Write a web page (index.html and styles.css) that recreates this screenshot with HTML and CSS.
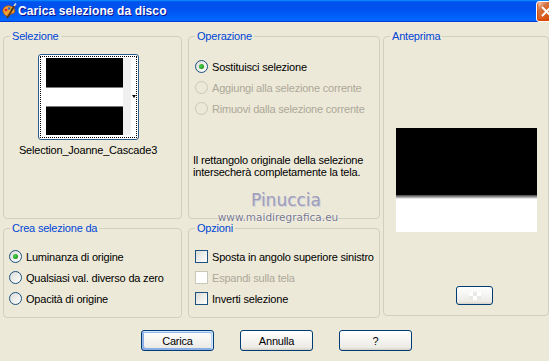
FILE: index.html
```html
<!DOCTYPE html>
<html lang="it">
<head>
<meta charset="utf-8">
<title>Carica selezione da disco</title>
<link rel="stylesheet" href="styles.css">
</head>
<body>
<div class="window">
  <div class="titlebar">
    <svg class="app-icon" width="16" height="16" viewBox="0 0 16 16">
      <path d="M2 9 C1 5 5 2 9 3 C13 4 15 7 13 10 C12 11 10 10 9 12 C8 14 4 14 2 9 Z" fill="#f0a030" stroke="#a05010" stroke-width="0.8"/>
      <circle cx="5" cy="7" r="1.3" fill="#e02020"/>
      <circle cx="8" cy="5.5" r="1.2" fill="#2060e0"/>
      <circle cx="11" cy="6.5" r="1.2" fill="#20a020"/>
      <path d="M6 15 L14 2" stroke="#603010" stroke-width="1.6"/>
      <path d="M13 3 L15 0.5" stroke="#e0e0e0" stroke-width="1.6"/>
    </svg>
    <span class="title">Carica selezione da disco</span>
    <div class="close">
      <svg width="19" height="19" viewBox="0 0 19 19"><path d="M5 5 L14 14 M14 5 L5 14" stroke="#fff" stroke-width="2"/></svg>
    </div>
  </div>

  <div class="panels">
    <fieldset class="box box-sel">
      <legend>Selezione</legend>
      <div class="sel-content">
        <div class="thumb">
          <div class="focus">
            <div class="thumb-img"></div>
            <div class="thumb-strip"></div>
            <div class="thumb-arrow"></div>
          </div>
        </div>
        <div class="sel-name">Selection_Joanne_Cascade3</div>
      </div>
    </fieldset>

    <fieldset class="box box-op">
      <legend>Operazione</legend>
      <div class="op-content">
        <div class="list">
          <div class="row"><span class="radio checked"></span><span>Sostituisci selezione</span></div>
          <div class="row disabled"><span class="radio"></span><span>Aggiungi alla selezione corrente</span></div>
          <div class="row disabled"><span class="radio"></span><span>Rimuovi dalla selezione corrente</span></div>
        </div>
        <p class="desc">Il rettangolo originale della selezione<br>intersecherà completamente la tela.</p>
      </div>
    </fieldset>

    <fieldset class="box box-prev">
      <legend>Anteprima</legend>
      <div class="prev-content">
        <div class="preview"></div>
        <div class="mini-btn"><span class="checker"></span></div>
      </div>
    </fieldset>

    <fieldset class="box box-crea">
      <legend>Crea selezione da</legend>
      <div class="crea-content list">
        <div class="row"><span class="radio checked"></span><span>Luminanza di origine</span></div>
        <div class="row"><span class="radio"></span><span>Qualsiasi val. diverso da zero</span></div>
        <div class="row"><span class="radio"></span><span>Opacità di origine</span></div>
      </div>
    </fieldset>

    <fieldset class="box box-opt">
      <legend>Opzioni</legend>
      <div class="opt-content list">
        <div class="row"><span class="check"></span><span>Sposta in angolo superiore sinistro</span></div>
        <div class="row disabled"><span class="check"></span><span>Espandi sulla tela</span></div>
        <div class="row"><span class="check"></span><span>Inverti selezione</span></div>
      </div>
    </fieldset>
  </div>

  <div class="buttons">
    <button class="btn default">Carica</button>
    <button class="btn">Annulla</button>
    <button class="btn">?</button>
  </div>

  <div class="watermark">
    <div class="wm-name">Pinuccia</div>
    <div class="wm-url">www.maidiregrafica.eu</div>
  </div>
</div>
</body>
</html>
```

FILE: styles.css
```css
html, body {
  margin: 0;
  padding: 0;
}
body {
  width: 549px;
  height: 361px;
  overflow: hidden;
  background: #ECE9D8;
  font-family: "Liberation Sans", Arial, sans-serif;
  font-size: 11px;
  letter-spacing: -0.2px;
  color: #000;
}
.window {
  position: relative;
  width: 549px;
  height: 361px;
  overflow: hidden;
}
.titlebar {
  height: 22px;
  display: flex;
  align-items: center;
  overflow: hidden;
  background: linear-gradient(180deg, #0997ff, #0053ee 8%, #0050ee 40%, #0066ff 88%, #0066ff 93%, #005bff 95%, #003dd7 96%, #003dd7);
}
.app-icon {
  margin-left: 1px;
  flex: none;
}
.title {
  margin-left: 1px;
  color: #fff;
  font-weight: bold;
  font-size: 12px;
  letter-spacing: 0.1px;
  text-shadow: 1px 1px #0f1089;
}
.close {
  margin-left: auto;
  margin-right: -8px;
  width: 21px;
  height: 21px;
  box-sizing: border-box;
  border: 1px solid #fff;
  border-radius: 3px;
  flex: none;
  display: flex;
  align-items: center;
  justify-content: center;
  background: radial-gradient(circle at 90% 90%, #cc4600 0, #dc6527 55%, #cd7546 70%, #ffccb2 90%, #fff 100%);
  box-shadow: inset 0 -1px 2px 1px #da4600;
}

.panels {
  display: grid;
  grid-template-columns: 179px 6px 192px 3px 166px;
  grid-template-rows: 189px 96px;
  row-gap: 3px;
  padding: 8px 0 0 3px;
}
.box {
  margin: 0;
  padding: 0;
  min-width: 0;
  border: 1px solid #D0D0BF;
  border-radius: 4px;
}
.box legend {
  margin-left: 6px;
  padding: 0 2px;
  line-height: 13px;
  color: #0046D5;
}
.box-sel { grid-column: 1; grid-row: 1; }
.box-op { grid-column: 3; grid-row: 1; }
.box-prev { grid-column: 5; grid-row: 1 / 3; align-self: start; height: 286px; box-sizing: border-box; }
.box-crea { grid-column: 1; grid-row: 2; }
.box-opt { grid-column: 3; grid-row: 2; }

.sel-content {
  display: flex;
  flex-direction: column;
  align-items: center;
  gap: 4px;
  padding: 11px 9px 0 0;
}
.thumb {
  width: 101px;
  height: 86px;
  box-sizing: border-box;
  border: 1px solid #2B5A8C;
  border-radius: 3px;
  background: #fff;
  padding: 1px;
}
.focus {
  height: 100%;
  box-sizing: border-box;
  border: 1px dotted #000;
  display: flex;
  align-items: flex-start;
  padding: 1px 0 0 5px;
}
.thumb-img {
  width: 78px;
  height: 77px;
  background: linear-gradient(#000 0 29px, #7a7a7a 29px 30px, #fff 30px 48px, #7a7a7a 48px 49px, #000 49px);
}
.thumb-strip {
  width: 8px;
  height: 77px;
  background: #F0F0F0;
}
.thumb-arrow {
  margin-top: 37px;
  margin-left: 1px;
  width: 0;
  height: 0;
  border-left: 2.5px solid transparent;
  border-right: 2.5px solid transparent;
  border-top: 3px solid #000;
}
.sel-name {
  line-height: 13px;
}

.list {
  display: flex;
  flex-direction: column;
  gap: 8px;
}
.row {
  display: flex;
  align-items: center;
  gap: 4px;
  height: 13px;
  white-space: nowrap;
}
.row.disabled {
  color: #ACA899;
}
.radio {
  width: 13px;
  height: 13px;
  box-sizing: border-box;
  border-radius: 50%;
  border: 1px solid #1C5180;
  background: linear-gradient(135deg, #DCDCD7, #fff);
  flex: none;
  display: flex;
  align-items: center;
  justify-content: center;
}
.radio.checked::after {
  content: "";
  width: 5px;
  height: 5px;
  border-radius: 50%;
  background: radial-gradient(circle at 40% 40%, #55d451, #21a121 60%, #1a8a1a);
}
.disabled .radio {
  border-color: #CAC8BB;
  background: #ECE9D8;
}
.check {
  width: 13px;
  height: 13px;
  box-sizing: border-box;
  border: 1px solid #1C5180;
  background: linear-gradient(135deg, #DCDCD7, #fff);
  flex: none;
}
.disabled .check {
  border-color: #CAC8BB;
  background: #fff;
}

.op-content {
  padding: 17px 0 0 6px;
}
.desc {
  margin: 39px 0 0 -2px;
  line-height: 12px;
}

.prev-content {
  display: flex;
  flex-direction: column;
  align-items: flex-start;
  padding: 85px 0 0 12px;
}
.preview {
  width: 141px;
  height: 104px;
  background: linear-gradient(#000 0 67px, #444 67px, #999 69px, #fff 71px);
}
.mini-btn {
  margin: 54px 0 0 60px;
  width: 37px;
  height: 19px;
  box-sizing: border-box;
  border: 1px solid #003C74;
  border-radius: 3px;
  background: linear-gradient(180deg, #fff, #ECEBE6 86%, #D6D0C5);
  display: flex;
  align-items: center;
  justify-content: center;
}
.checker {
  width: 12px;
  height: 8px;
  background:
    linear-gradient(90deg, #fff 0 4px, #eaeae4 4px 8px, #fff 8px) top / 12px 4px no-repeat,
    linear-gradient(90deg, #eaeae4 0 4px, #fff 4px 8px, #eaeae4 8px) bottom / 12px 4px no-repeat;
}

.crea-content {
  padding: 15px 0 0 5px;
}
.opt-content {
  padding: 15px 0 0 6px;
}

.buttons {
  display: flex;
  justify-content: center;
  gap: 26px;
  padding-left: 4px;
  margin-top: 12px;
}
.btn {
  width: 73px;
  height: 21px;
  box-sizing: border-box;
  border: 1px solid #003C74;
  border-radius: 3px;
  background: linear-gradient(180deg, #fff, #ECEBE6 86%, #D6D0C5);
  font-family: "Liberation Sans", Arial, sans-serif;
  font-size: 11px;
  letter-spacing: -0.2px;
  color: #000;
  padding: 0;
}
.btn.default {
  box-shadow: inset -1px 1px #cee7ff, inset 1px 2px #98b8ea, inset -2px 2px #bcd4f6, inset 1px -1px #89ade4, inset 2px -2px #89ade4;
}

.watermark {
  position: absolute;
  left: 198px;
  top: 191px;
  width: 160px;
  display: flex;
  flex-direction: column;
  align-items: center;
  gap: 2px;
  letter-spacing: 0;
}
.wm-name {
  font-family: "DejaVu Sans", sans-serif;
  font-size: 17px;
  line-height: 18px;
  color: #9E9EBA;
  margin-left: 16px;
  text-shadow: 1px 1px 0 #d0d0dc;
}
.wm-url {
  font-family: "DejaVu Sans", sans-serif;
  font-size: 10.5px;
  line-height: 12px;
  color: #76768a;
  text-shadow: 0 0 2px #fff, 0 0 1px #fff;
}
```
